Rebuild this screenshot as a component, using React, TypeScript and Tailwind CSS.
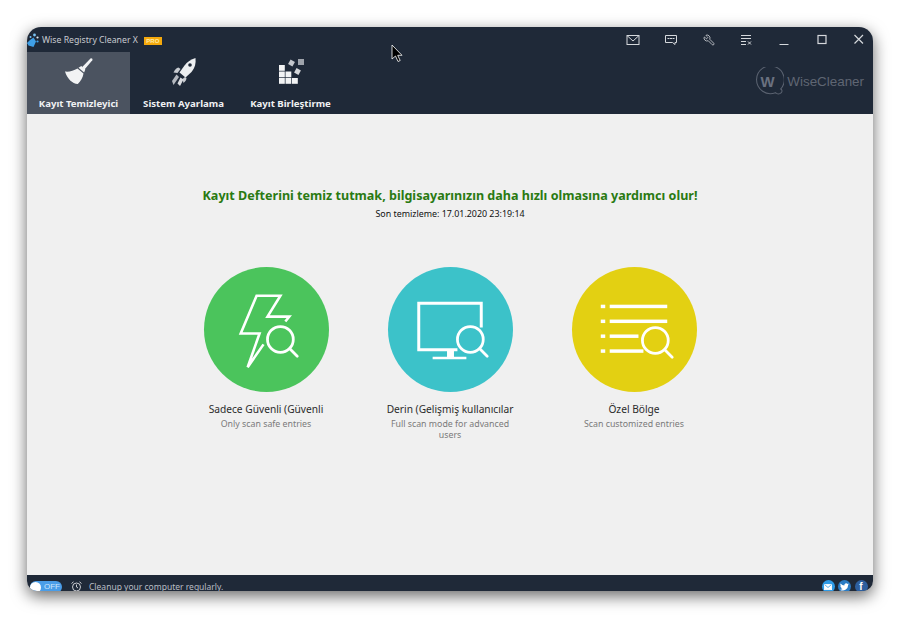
import type { ReactNode } from "react";
import { Wrench } from "lucide-react";

const tahoma = "font-['Noto_Sans','DejaVu_Sans',sans-serif]";

function Broom() {
  return (
    <svg width="30" height="30" viewBox="0 0 30 30" fill="#f2f3f4">
      <path d="M26.5 1.5c1-.8 2.6.4 1.8 1.8L20.5 12.5l-2.5-2.2z" />
      <path d="M14.5 10.8l2.8-1.8 4 3.500-1.200 3z" />
      <path d="M1 14.5c4 .6 8.5-.7 12.5-3l6 5c-.6 4-2.8 8-5.700 10.500-5.500-.5-10.500-5-12.800-12.500z" />
    </svg>
  );
}

function Rocket() {
  return (
    <svg width="28" height="30" viewBox="0 0 28 30" fill="#eceef0">
      <path d="M25.5 1c.6 5-.5 10-4 14l-6 5.500-6-5 5-7C17 5 21 2.500 25.500 1z" />
      <path d="M8.5 10.5c-2 .5-3.500 2-5 5l4 .5 3-4z" fill="#c9ccd1" />
      <path d="M16.5 21c-.2 2-1 3.500-3 5l-1-4 2.500-2z" fill="#c9ccd1" />
      <path d="M6.5 17.5l-4.500 6.500 1.500 4 5.500-8z" fill="#b4b8bf" />
      <path d="M10.5 20.5l-3 6 2.500 2.500 3.500-6.500z" fill="#d9dbdf" />
      <circle cx="20" cy="8" r="1.8" fill="#1f2937" />
    </svg>
  );
}

function Blocks() {
  const solid = [
    [0, 6],
    [0, 12.5],
    [6.5, 12.5],
    [0, 19],
    [6.5, 19],
    [13, 19],
  ];
  return (
    <svg width="26" height="26" viewBox="0 0 26 26" fill="#f2f3f4" className="ml-[2px]">
      {solid.map(([x, y]) => (
        <rect key={`${x}-${y}`} x={x} y={y} width="5.8" height="5.8" />
      ))}
      <rect x="10" y="1.5" width="5" height="5" transform="rotate(30 12.5 4)" fill="#c4c7cc" />
      <rect x="19" y="0" width="6" height="6" fill="#9ea3ab" />
      <rect x="16" y="10" width="5" height="5" transform="rotate(30 18.5 12.5)" fill="#d5d7da" />
    </svg>
  );
}

function TitleLogo() {
  return (
    <svg width="12" height="15" viewBox="0 0 12 15" className="mt-[2px]">
      <path d="M3 7l3.500-2.500 2.500 4-2.500 5.500-5-1.500L0 10z" fill="#3f9fe6" />
      <circle cx="7.5" cy="2" r="1.4" fill="#7cc4f4" />
      <circle cx="10.5" cy="4.5" r="1.1" fill="#dfe9f2" />
      <circle cx="10.5" cy="8.5" r="1.1" fill="#3f9fe6" />
      <circle cx="3.5" cy="4" r="1" fill="#7cc4f4" />
    </svg>
  );
}

function TopIcon({ children }: { children: ReactNode }) {
  return (
    <button className="w-[37.67px] h-[25px] flex items-center justify-center text-[#d5d8dc]">
      <svg width="16" height="16" viewBox="0 0 16 16" fill="none" stroke="currentColor" strokeWidth="1">
        {children}
      </svg>
    </button>
  );
}

function TopButtons() {
  return (
    <div className="flex items-center">
      <TopIcon>
        <rect x="2" y="3.5" width="12" height="9" />
        <path d="M2 3.5L8 9l6-5.500" />
      </TopIcon>
      <TopIcon>
        <path d="M2.5 3.5h11v7H12v2l-2.500-2h-7z" />
        <path d="M4.5 6.5h2M7 6.5h2M9.5 6.5h2" />
      </TopIcon>
      <button className="w-[37.67px] h-[25px] flex items-center justify-center text-[#d5d8dc]">
        <Wrench size={12} strokeWidth={1.6} className="-scale-x-100" />
      </button>
      <TopIcon>
        <path d="M3 3.5h10M3 6.5h10M3 9.5h5M3 12.5h5M10 9.5l3 3M13 9.5l-3 3" />
      </TopIcon>
      <TopIcon>
        <path d="M3.5 12.5h9" strokeWidth="1.2" />
      </TopIcon>
      <TopIcon>
        <rect x="4" y="3.5" width="8" height="8" strokeWidth="1.2" />
      </TopIcon>
      <TopIcon>
        <path d="M3.5 3L12 11.5M12 3l-8.5 8.5" strokeWidth="1.2" />
      </TopIcon>
    </div>
  );
}

function NavTab({ icon, label, active }: { icon: ReactNode; label: string; active?: boolean }) {
  return (
    <div className={`h-full flex flex-col items-center ${active ? "w-[103px] bg-[#4b5360]" : "w-[107px]"}`}>
      <div className="h-[40px] flex items-center justify-center">{icon}</div>
      <span className={`${tahoma} mt-[5px] text-[9.65px] leading-[14px] font-bold text-[#f0f1f3]`}>{label}</span>
    </div>
  );
}

function Magnifier({ cx, cy }: { cx: number; cy: number }) {
  return (
    <g fill="none" stroke="#fff" strokeWidth="2.8" strokeLinecap="round">
      <circle cx={cx} cy={cy} r="13" />
      <path d={`M${cx + 9.5} ${cy + 9.5}L${cx + 17} ${cy + 17}`} />
    </g>
  );
}

function ScanCircle({ color, children, title, sub }: { color: string; children: ReactNode; title: string; sub: string }) {
  return (
    <div className="w-[125px] flex flex-col items-center text-center">
      <div className={`w-[125px] h-[125px] rounded-full ${color}`}>
        <svg width="125" height="125" viewBox="0 0 126 126">
          {children}
        </svg>
      </div>
      <div className={`${tahoma} mt-[9px] whitespace-nowrap text-[10.2px] leading-[16px] text-[#2b2b2b]`}>{title}</div>
      <div className={`${tahoma} mt-[2px] w-[125px] text-[8.8px] leading-[11px] text-[#7a7a7a]`}>{sub}</div>
    </div>
  );
}

export default function App() {
  return (
    <div className="w-[900px] h-[618px] bg-white p-[27px] relative overflow-hidden">
      <div className="w-[846px] h-[564px] rounded-t-[14px] rounded-b-[10px] overflow-hidden bg-[#f0f0f0] flex flex-col shadow-[0_5px_16px_rgba(0,0,0,0.6)]">
        <div className="bg-[#1f2938] h-[87px] shrink-0 flex flex-col">
          <div className="h-[25px] flex items-center">
            <TitleLogo />
            <span className={`${tahoma} ml-[3px] mt-[2px] text-[8.7px] text-[#c9ccd1]`}>Wise Registry Cleaner X</span>
            <span className="ml-[6px] mt-[2px] w-[18px] h-[8px] bg-[#f5a90c] text-[6px] leading-[8px] font-bold text-center text-[#fde9a8] font-['Liberation_Sans',sans-serif]">
              PRO
            </span>
            <div className="ml-auto -mr-[5px]">
              <TopButtons />
            </div>
          </div>
          <div className="h-[62px] flex">
            <NavTab active icon={<Broom />} label="Kayıt Temizleyici" />
            <NavTab icon={<Rocket />} label="Sistem Ayarlama" />
            <NavTab icon={<Blocks />} label="Kayıt Birleştirme" />
            <div className="ml-auto mr-[9px] flex items-center gap-[3px] pb-[2px]">
              <svg width="32" height="30" viewBox="0 0 30 28">
                <path
                  d="M27 20.5a13 13 0 1 0-5 3.500c1.500 1.500 4 1.500 5.500 0 1-1 .7-3-.5-3.500z"
                  fill="none"
                  stroke="#5a6270"
                  strokeWidth="1"
                />
                <text x="14.5" y="19" textAnchor="middle" fontSize="14" fontWeight="700" fill="#6a7180" fontFamily="Liberation Sans, sans-serif">
                  W
                </text>
              </svg>
              <span className="font-['Liberation_Sans',sans-serif] text-[13.4px] text-[#5f6673]">WiseCleaner</span>
            </div>
          </div>
        </div>

        <main className="flex-1 flex flex-col items-center pt-[74px]">
          <h1 className={`${tahoma} text-[12.57px] leading-[16px] font-bold text-[#2a7a12]`}>
            Kayıt Defterini temiz tutmak, bilgisayarınızın daha hızlı olmasına yardımcı olur!
          </h1>
          <p className={`${tahoma} mt-[3px] text-[8.9px] leading-[14px] text-[#111]`}>Son temizleme: 17.01.2020 23:19:14</p>
          <div className="mt-[46px] flex gap-[59px]">
            <ScanCircle color="bg-[#4bc45c]" title="Sadece Güvenli (Güvenli" sub="Only scan safe entries">
              <path d="M82 55l4-5H64L77 29H53L37 67h19L44 101l16-23" fill="none" stroke="#fff" strokeWidth="2.6" />
              <Magnifier cx={77} cy={73} />
            </ScanCircle>
            <ScanCircle color="bg-[#3cc2c9]" title="Derin (Gelişmiş kullanıcılar" sub="Full scan mode for advanced users">
              <path d="M94 61V36.5H31V83.5H70" fill="none" stroke="#fff" strokeWidth="3" />
              <path d="M59.5 84h7v7h-7zM45 90.5h34v2.500H45z" fill="#fff" />
              <Magnifier cx={83} cy={73} />
            </ScanCircle>
            <ScanCircle color="bg-[#e3d012]" title="Özel Bölge" sub="Scan customized entries">
              <g fill="#fff">
                <rect x="29" y="38" width="4.5" height="3.5" />
                <rect x="38" y="38" width="58" height="3.5" />
                <rect x="29" y="53" width="4.5" height="3.5" />
                <rect x="38" y="53" width="58" height="3.5" />
                <rect x="29" y="68" width="4.5" height="3.5" />
                <rect x="38" y="68" width="29" height="3.5" />
                <rect x="29" y="83" width="4.5" height="3.5" />
                <rect x="38" y="83" width="34" height="3.5" />
              </g>
              <Magnifier cx={84} cy={74} />
            </ScanCircle>
          </div>
        </main>

        <footer className="bg-[#1f2938] h-[16px] shrink-0 flex items-start relative">
          <div className="ml-[3px] mt-[6px] w-[32px] h-[12px] rounded-full bg-[#4a9de8] flex items-center">
            <div className="w-[11px] h-[11px] rounded-full bg-white" />
            <span className="ml-[3px] text-[8px] leading-none text-[#cfe6fb] font-['Liberation_Sans',sans-serif]">OFF</span>
          </div>
          <svg className="ml-[9px] mt-[6px]" width="11" height="11" viewBox="0 0 11 11" fill="none" stroke="#c9ccd1" strokeWidth="1">
            <circle cx="5.5" cy="6" r="4" />
            <path d="M5.5 3.5V6l1.500 1M.5 2.5L2.500.8M10.5 2.5L8.500.8" />
          </svg>
          <span className={`${tahoma} ml-[7px] mt-[5px] text-[8.5px] leading-[14px] text-[#b9bdc4]`}>Cleanup your computer regularly.</span>
          <div className="ml-auto mr-[5.5px] mt-[5px] flex gap-[3.5px]">
            <span className="w-[13px] h-[13px] rounded-full bg-[#2f9be6] flex items-center justify-center">
              <svg width="8" height="6" viewBox="0 0 8 6" fill="none" stroke="#fff" strokeWidth="0.8">
                <rect x="0.4" y="0.4" width="7.2" height="5.2" fill="#fff" />
                <path d="M.5.5L4 3.500 7.5.5" stroke="#2f9be6" />
              </svg>
            </span>
            <span className="w-[13px] h-[13px] rounded-full bg-[#2b7cc4] flex items-center justify-center">
              <svg width="9" height="8" viewBox="0 0 24 20" fill="#fff">
                <path d="M24 2.4a9.8 9.8 0 0 1-2.800.8A5 5 0 0 0 23.300.5a9.800 9.800 0 0 1-3.100 1.200 4.900 4.900 0 0 0-8.400 4.500A14 14 0 0 1 1.700.9a4.900 4.900 0 0 0 1.500 6.600 4.900 4.900 0 0 1-2.200-.6 4.900 4.900 0 0 0 3.900 4.900 4.900 4.900 0 0 1-2.200.1 4.900 4.900 0 0 0 4.600 3.400A9.900 9.900 0 0 1 0 17.300 14 14 0 0 0 21.500 4.900 10 10 0 0 0 24 2.400z" />
              </svg>
            </span>
            <span className="w-[13px] h-[13px] rounded-full bg-[#2e5f9e] text-white text-[10px] leading-[13px] text-center font-bold font-['Liberation_Sans',sans-serif]">
              f
            </span>
          </div>
        </footer>
      </div>

      {/* mouse pointer caught in the screenshot */}
      <svg className="absolute left-[391px] top-[44px]" width="12" height="19" viewBox="0 0 12 19">
        <path d="M1 1v14l3.500-3 2.500 5.500 2.200-1-2.500-5.200H11z" fill="#000" stroke="#fff" strokeWidth="0.8" />
      </svg>
    </div>
  );
}
